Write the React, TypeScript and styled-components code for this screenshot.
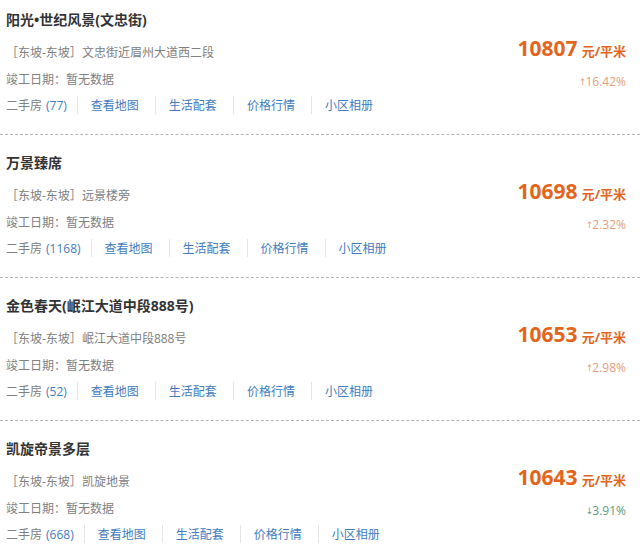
import React from "react";
import styled, { createGlobalStyle } from "styled-components";

const GlobalStyle = createGlobalStyle`
  body {
    margin: 0;
    background: #fff;
    font-family: "Open Sans", "Noto Sans CJK SC", sans-serif;
  }
`;

const List = styled.div`
  width: 640px;
`;

const Item = styled.div`
  display: flex;
  justify-content: space-between;
  padding: 16px 14px 17px 6px;
  border-bottom: 1px dashed #b4b4b4;

  &:first-child {
    padding-top: 8px;
  }
`;

const Info = styled.div`
  display: flex;
  flex-direction: column;
`;

const Title = styled.div`
  font-size: 14px;
  font-weight: bold;
  line-height: 24px;
  color: #333;
`;

const Line = styled.div<{ $gap?: number }>`
  font-size: 12px;
  line-height: 27px;
  color: #808080;
  margin-top: ${(p) => p.$gap ?? 0}px;
`;

const Links = styled.div`
  display: flex;
  align-items: center;
  height: 24px;
  font-size: 12px;
  color: #808080;
`;

const Resale = styled.span`
  padding-right: 10px;
`;

const Count = styled.span`
  color: #3f7cc0;
  margin-left: 4px;
`;

const LinkItem = styled.a`
  display: flex;
  align-items: center;
  height: 18px;
  padding: 0 16px 0 13px;
  border-left: 1px solid #e6e6e6;
  color: #3f7cc0;
  text-decoration: none;
  cursor: pointer;
`;

const Side = styled.div`
  display: flex;
  flex-direction: column;
  align-items: flex-end;
  margin-top: 26px;
`;

const Price = styled.div`
  display: flex;
  align-items: baseline;
  line-height: 28px;
  color: #e3651c;
  font-weight: bold;
`;

const Amount = styled.span`
  font-size: 21px;
  margin-right: 4px;
`;

const Unit = styled.span`
  font-size: 13px;
`;

const Change = styled.div<{ $down?: boolean }>`
  display: flex;
  align-items: center;
  margin-top: 7px;
  font-size: 12px;
  line-height: 20px;
  color: ${(p) => (p.$down ? "#5e9b7c" : "#e39e80")};
`;

const Arrow = styled.span`
  font-family: "DejaVu Sans", sans-serif;
  font-size: 9px;
  line-height: 20px;
  margin: 0 -1px 0 -2px;
`;

type Estate = {
  name: string;
  addr: string;
  count: number;
  price: number;
  change: string;
  down?: boolean;
};

const estates: Estate[] = [
  { name: "阳光•世纪风景(文忠街)", addr: "文忠街近眉州大道西二段", count: 77, price: 10807, change: "16.42%" },
  { name: "万景臻席", addr: "远景楼旁", count: 1168, price: 10698, change: "2.32%" },
  { name: "金色春天(岷江大道中段888号)", addr: "岷江大道中段888号", count: 52, price: 10653, change: "2.98%" },
  { name: "凯旋帝景多层", addr: "凯旋地景", count: 668, price: 10643, change: "3.91%", down: true },
];

const links = ["查看地图", "生活配套", "价格行情", "小区相册"];

const App: React.FC = () => {
  return (
    <>
      <GlobalStyle />
      <List>
        {estates.map((e) => (
          <Item key={e.name}>
            <Info>
              <Title>{e.name}</Title>
              <Line $gap={7}>［东坡-东坡］{e.addr}</Line>
              <Line>竣工日期：暂无数据</Line>
              <Links>
                <Resale>
                  二手房<Count>({e.count})</Count>
                </Resale>
                {links.map((l) => (
                  <LinkItem key={l}>{l}</LinkItem>
                ))}
              </Links>
            </Info>
            <Side>
              <Price>
                <Amount>{e.price}</Amount>
                <Unit>元/平米</Unit>
              </Price>
              <Change $down={e.down}>
                <Arrow>{e.down ? "↓" : "↑"}</Arrow>
                {e.change}
              </Change>
            </Side>
          </Item>
        ))}
      </List>
    </>
  );
};

export default App;
